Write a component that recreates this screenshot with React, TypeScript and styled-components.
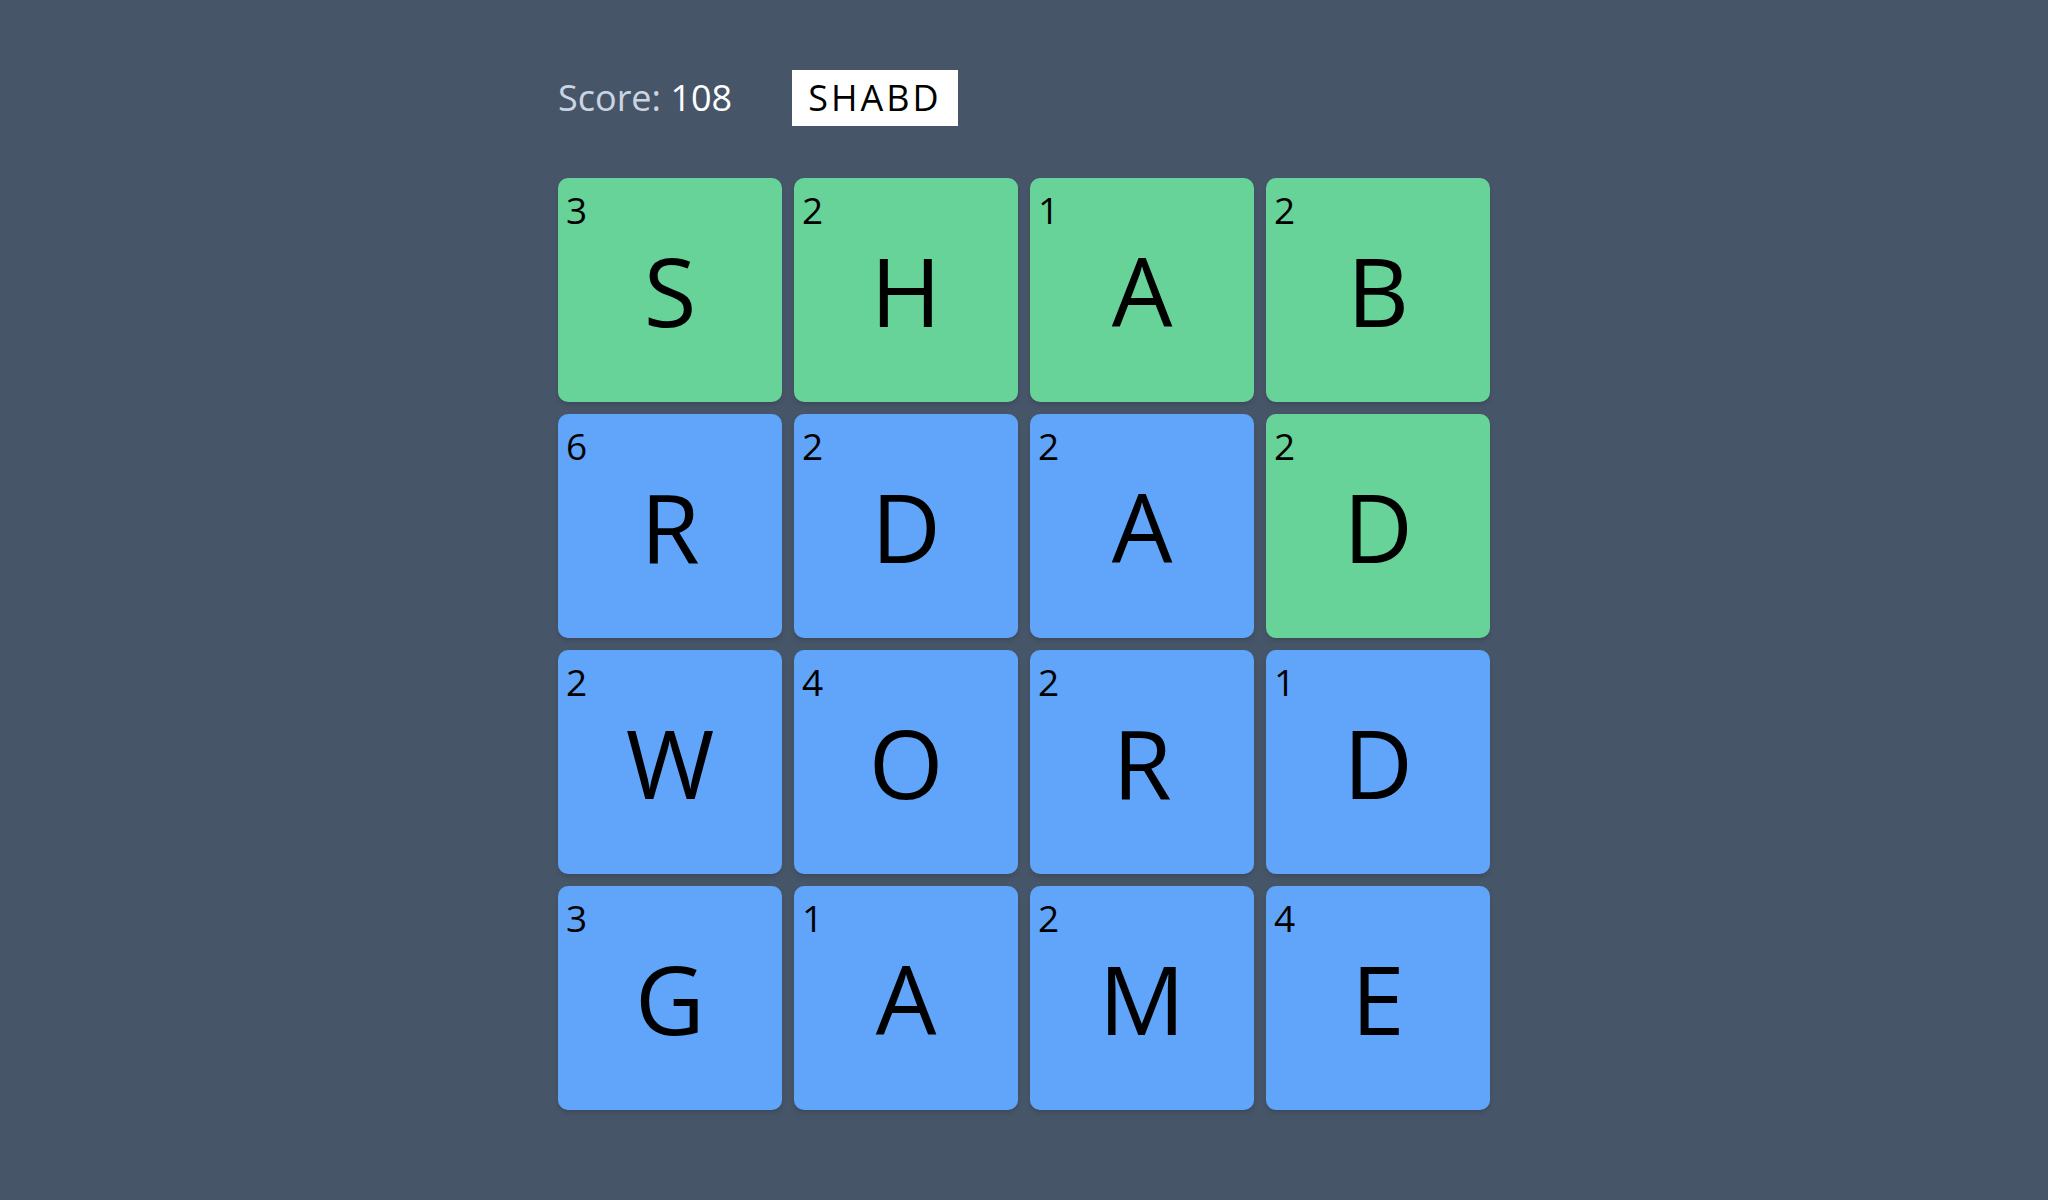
import React from "react";
import styled, { createGlobalStyle } from "styled-components";

const GlobalStyle = createGlobalStyle`
  html, body {
    margin: 0;
    padding: 0;
    background: #475569;
    font-family: "Open Sans", "Noto Sans", sans-serif;
  }
`;

const Page = styled.div`
  min-height: 100vh;
  display: flex;
  justify-content: center;
  padding-top: 70px;
  box-sizing: border-box;
`;

const Game = styled.div`
  width: 932px;
  display: flex;
  flex-direction: column;
  gap: 52px;
`;

const Header = styled.div`
  display: flex;
  align-items: center;
  gap: 60px;
`;

const Score = styled.div`
  font-size: 36px;
  line-height: 40px;
  color: #cbd5e1;
`;

const ScoreValue = styled.span`
  color: #ffffff;
`;

const CurrentWord = styled.div`
  background: #ffffff;
  color: #000000;
  font-size: 36px;
  line-height: 40px;
  padding: 8px 16px;
  letter-spacing: 3px;
`;

const Board = styled.div`
  display: grid;
  grid-template-columns: repeat(4, 224px);
  grid-auto-rows: 224px;
  gap: 12px;
`;

const Tile = styled.div<{ selected: boolean }>`
  position: relative;
  border-radius: 10px;
  background: ${({ selected }) => (selected ? "#68d399" : "#60a5fa")};
  box-shadow: 0 4px 6px -1px rgba(0, 0, 0, 0.1),
    0 2px 4px -2px rgba(0, 0, 0, 0.1);
  display: flex;
  align-items: center;
  justify-content: center;
  color: #000000;
  cursor: pointer;
`;

const Points = styled.span`
  position: absolute;
  top: 12px;
  left: 8px;
  font-size: 37px;
  line-height: 40px;
`;

const Letter = styled.span`
  font-size: 96px;
  line-height: 1;
`;

const tiles: { letter: string; points: number; selected: boolean }[] = [
  { letter: "S", points: 3, selected: true },
  { letter: "H", points: 2, selected: true },
  { letter: "A", points: 1, selected: true },
  { letter: "B", points: 2, selected: true },
  { letter: "R", points: 6, selected: false },
  { letter: "D", points: 2, selected: false },
  { letter: "A", points: 2, selected: false },
  { letter: "D", points: 2, selected: true },
  { letter: "W", points: 2, selected: false },
  { letter: "O", points: 4, selected: false },
  { letter: "R", points: 2, selected: false },
  { letter: "D", points: 1, selected: false },
  { letter: "G", points: 3, selected: false },
  { letter: "A", points: 1, selected: false },
  { letter: "M", points: 2, selected: false },
  { letter: "E", points: 4, selected: false },
];

export default function App() {
  return (
    <>
      <GlobalStyle />
      <Page>
        <Game>
          <Header>
            <Score>
              Score: <ScoreValue>108</ScoreValue>
            </Score>
            <CurrentWord>SHABD</CurrentWord>
          </Header>
          <Board>
            {tiles.map((t, i) => (
              <Tile key={i} selected={t.selected}>
                <Points>{t.points}</Points>
                <Letter>{t.letter}</Letter>
              </Tile>
            ))}
          </Board>
        </Game>
      </Page>
    </>
  );
}
